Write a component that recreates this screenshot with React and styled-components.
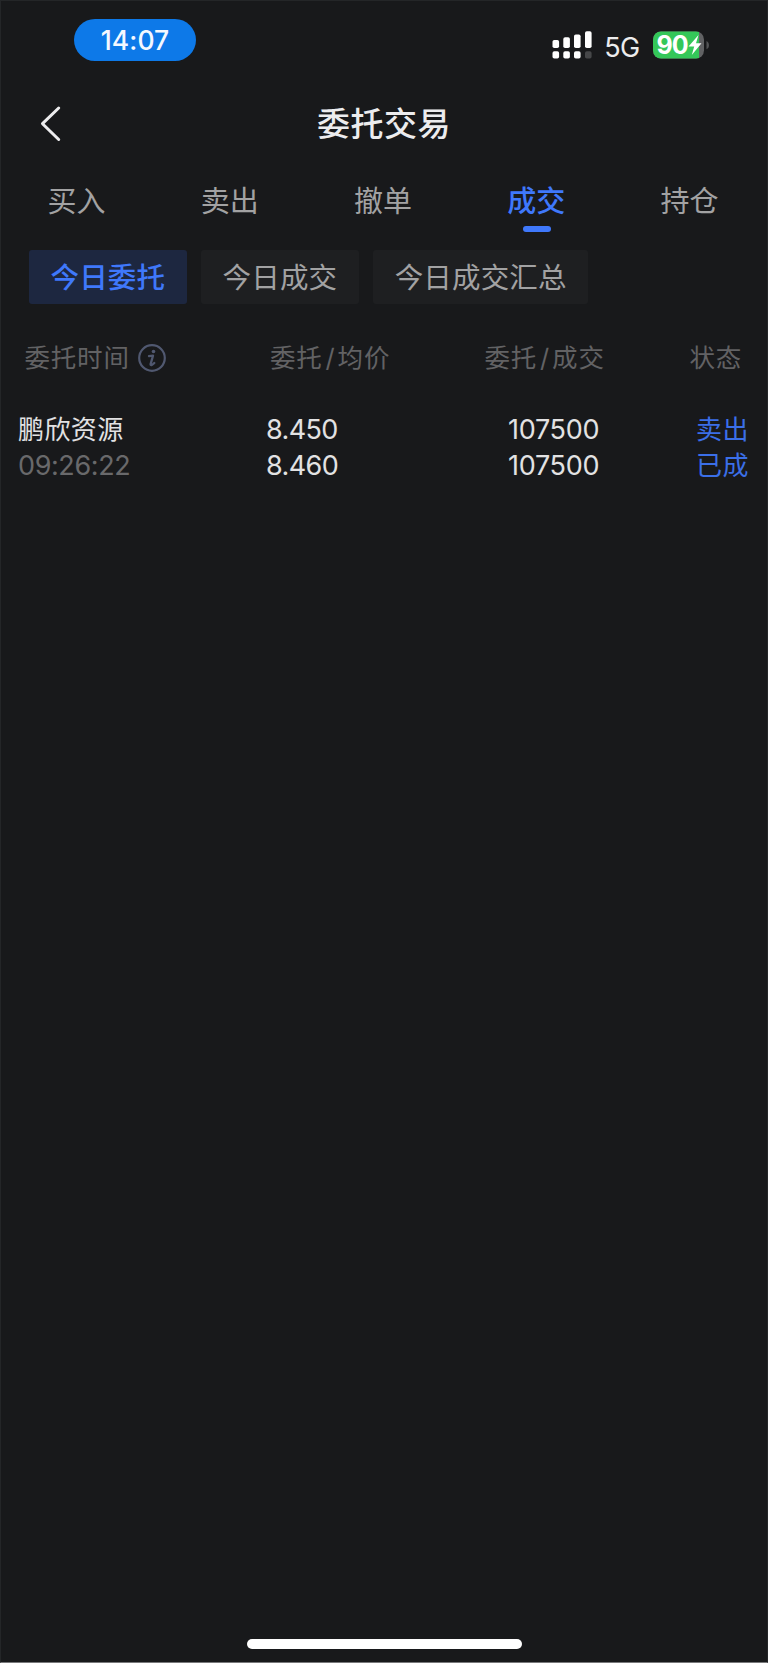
import React from 'react';
import styled, { createGlobalStyle } from 'styled-components';

const GlobalStyle = createGlobalStyle`
  * { box-sizing: border-box; }
  body {
    margin: 0;
    background: #18191b;
    font-family: Inter, "Noto Sans CJK SC", sans-serif;
    -webkit-font-smoothing: antialiased;
  }
`;

const Screen = styled.div`
  display: flex;
  flex-direction: column;
  width: 768px;
  height: 1663px;
  background: #18191b;
  border: 1px solid #242628;
  border-bottom-color: #78797b;
  overflow: hidden;
`;

const StatusBar = styled.header`
  display: flex;
  align-items: flex-start;
  justify-content: space-between;
  height: 84px;
  padding: 18px 57px 0 73px;
`;

const TimePill = styled.div`
  width: 122px;
  height: 42px;
  border-radius: 21px;
  background: #0d79e8;
  color: #f4f8ff;
  font-size: 26.5px;
  font-weight: 500;
  line-height: 43px;
  letter-spacing: 0.1px;
  text-align: center;
`;

const StatusIcons = styled.div`
  display: flex;
  align-items: center;
  height: 28px;
  margin-top: 12px;
`;

const Network = styled.span`
  margin: 5px 13.5px 0 12.5px;
  color: #ececed;
  font-size: 27px;
  line-height: 34px;
  letter-spacing: -0.6px;
`;

const TitleBar = styled.div`
  display: grid;
  grid-template-columns: 80px 1fr 80px;
  align-items: center;
  height: 78px;
`;

const BackButton = styled.button`
  display: flex;
  padding: 0 0 0 37px;
  border: 0;
  background: none;
`;

const Title = styled.h1`
  margin: 0;
  color: #ececee;
  font-size: 33px;
  font-weight: 500;
  line-height: 47px;
  letter-spacing: 0.5px;
  text-align: center;
`;

const Tabs = styled.nav`
  display: grid;
  grid-template-columns: repeat(5, 1fr);
  height: 87px;
`;

const Tab = styled.div`
  display: flex;
  flex-direction: column;
  align-items: center;
  padding-top: 18px;
  color: ${(p) => (p.$active ? '#3f78fb' : '#a2a2a3')};
  font-size: 29px;
  font-weight: ${(p) => (p.$active ? 500 : 400)};
  line-height: 42px;
`;

const TabLabel = styled.span`
  padding-right: 2px;
`;

const Indicator = styled.span`
  width: 28px;
  height: 6px;
  margin-top: 3px;
  border-radius: 3px;
  background: #3f78fb;
`;

const Chips = styled.div`
  display: flex;
  gap: 14.5px;
  padding-left: 28px;
`;

const Chip = styled.div`
  height: 54px;
  padding: 1px 21.5px 0;
  border-radius: 3px;
  background: ${(p) => (p.$active ? '#1d2740' : '#1e1f21')};
  color: ${(p) => (p.$active ? '#3f78fb' : '#a2a2a3')};
  font-size: 28.5px;
  font-weight: ${(p) => (p.$active ? 500 : 400)};
  line-height: 53px;
  letter-spacing: 0.15px;
  white-space: nowrap;
`;

const TableHead = styled.div`
  display: grid;
  grid-template-columns: 245.5px 214.5px 205px 1fr;
  align-items: center;
  height: 40px;
  margin-top: 34px;
  padding-left: 23.5px;
  color: #626264;
  font-size: 25.5px;
  line-height: 38px;
  letter-spacing: 0.8px;
  white-space: nowrap;
`;

const HeadCell = styled.div`
  display: flex;
  align-items: center;
  gap: 8px;
`;

const Slash = styled.span`
  margin: 0 2px 0 3px;
`;

const Row = styled.div`
  display: grid;
  grid-template-columns: 248px 242px 188px 1fr;
  margin-top: 34px;
  padding-left: 17px;
`;

const Cell = styled.div`
  display: flex;
  flex-direction: column;
  color: ${(p) => (p.$blue ? '#3b6fe8' : '#e2e2e3')};
  font-size: ${(p) => (p.$number ? '27px' : '26px')};
  line-height: 36px;
  letter-spacing: ${(p) => (p.$number ? '-0.3px' : '0.4px')};
  white-space: nowrap;
`;

const Price = styled.span`
  letter-spacing: -0.6px;
`;

const Time = styled.span`
  color: #69696b;
  font-size: 27px;
  letter-spacing: -0.4px;
`;

const HomeBar = styled.div`
  align-self: center;
  width: 275px;
  height: 10px;
  margin-top: auto;
  margin-bottom: 13px;
  border-radius: 5px;
  background: #fff;
`;

const tabs = ['买入', '卖出', '撤单', '成交', '持仓'];
const filters = ['今日委托', '今日成交', '今日成交汇总'];

function SignalIcon() {
  return (
    <svg width="40" height="28" viewBox="0 0 40 28" fill="#fff">
      <rect x="0.5" y="9" width="6.6" height="8" rx="1.8" />
      <rect x="11.3" y="6.3" width="6.6" height="10.7" rx="1.8" />
      <rect x="22" y="3.4" width="6.6" height="13.6" rx="1.8" />
      <rect x="33" y="0.3" width="6.6" height="16.7" rx="1.8" />
      <rect x="0.5" y="20.3" width="6.6" height="7.2" rx="1.8" />
      <rect x="11.3" y="20.3" width="6.6" height="7.2" rx="1.8" />
      <rect x="22" y="20.3" width="6.6" height="7.2" rx="1.8" />
      <rect x="33" y="20.3" width="6.6" height="7.2" rx="1.8" fill="#464749" />
    </svg>
  );
}

function BatteryIcon() {
  return (
    <svg width="57" height="28" viewBox="0 0 57 28">
      <defs>
        <clipPath id="battery">
          <rect x="0" y="0.5" width="51" height="27" rx="8" />
        </clipPath>
      </defs>
      <g clipPath="url(#battery)">
        <rect width="51" height="28" fill="#616264" />
        <rect width="46" height="28" fill="#34c759" />
      </g>
      <path d="M53.5 10C56.8 11.3 56.8 17 53.5 18.3Z" fill="#535456" />
      <text x="3.5" y="23" textLength="32" fill="#fff" fontFamily="Inter" fontSize="25" fontWeight="700">90</text>
      <path d="M45.5 4L35.5 15.6H41.2L38.8 24L48.5 12.3H43Z" fill="#fff" />
    </svg>
  );
}

function BackIcon() {
  return (
    <svg width="24" height="38" viewBox="0 0 24 38" fill="none" stroke="#ececee" strokeWidth="3" strokeLinecap="round" strokeLinejoin="round">
      <path d="M20.7 3L4.5 18.7L20.7 34.5" />
    </svg>
  );
}

function InfoIcon() {
  return (
    <svg width="28" height="28" viewBox="0 0 28 28" fill="none" stroke="#505870">
      <circle cx="14" cy="14" r="12.8" strokeWidth="2.2" />
      <circle cx="15.5" cy="7.5" r="1.8" fill="#505870" stroke="none" />
      <path d="M11 12.1L15 11.7L12.6 20.1C12.4 21.8 14 21.3 16.3 19" strokeWidth="2.3" strokeLinecap="round" strokeLinejoin="round" />
    </svg>
  );
}

export default function App() {
  return (
    <>
      <GlobalStyle />
      <Screen>
        <StatusBar>
          <TimePill>14:07</TimePill>
          <StatusIcons>
            <SignalIcon />
            <Network>5G</Network>
            <BatteryIcon />
          </StatusIcons>
        </StatusBar>
        <TitleBar>
          <BackButton aria-label="返回"><BackIcon /></BackButton>
          <Title>委托交易</Title>
        </TitleBar>
        <Tabs>
          {tabs.map((t, i) => (
            <Tab key={t} $active={i === 3}>
              <TabLabel>{t}</TabLabel>
              {i === 3 && <Indicator />}
            </Tab>
          ))}
        </Tabs>
        <Chips>
          {filters.map((f, i) => (
            <Chip key={f} $active={i === 0}>{f}</Chip>
          ))}
        </Chips>
        <TableHead>
          <HeadCell>委托时间<InfoIcon /></HeadCell>
          <div>委托<Slash>/</Slash>均价</div>
          <div>委托<Slash>/</Slash>成交</div>
          <div>状态</div>
        </TableHead>
        <Row>
          <Cell><span>鹏欣资源</span><Time>09:26:22</Time></Cell>
          <Cell $number><Price>8.450</Price><Price>8.460</Price></Cell>
          <Cell $number><span>107500</span><span>107500</span></Cell>
          <Cell $blue><span>卖出</span><span>已成</span></Cell>
        </Row>
        <HomeBar />
      </Screen>
    </>
  );
}
